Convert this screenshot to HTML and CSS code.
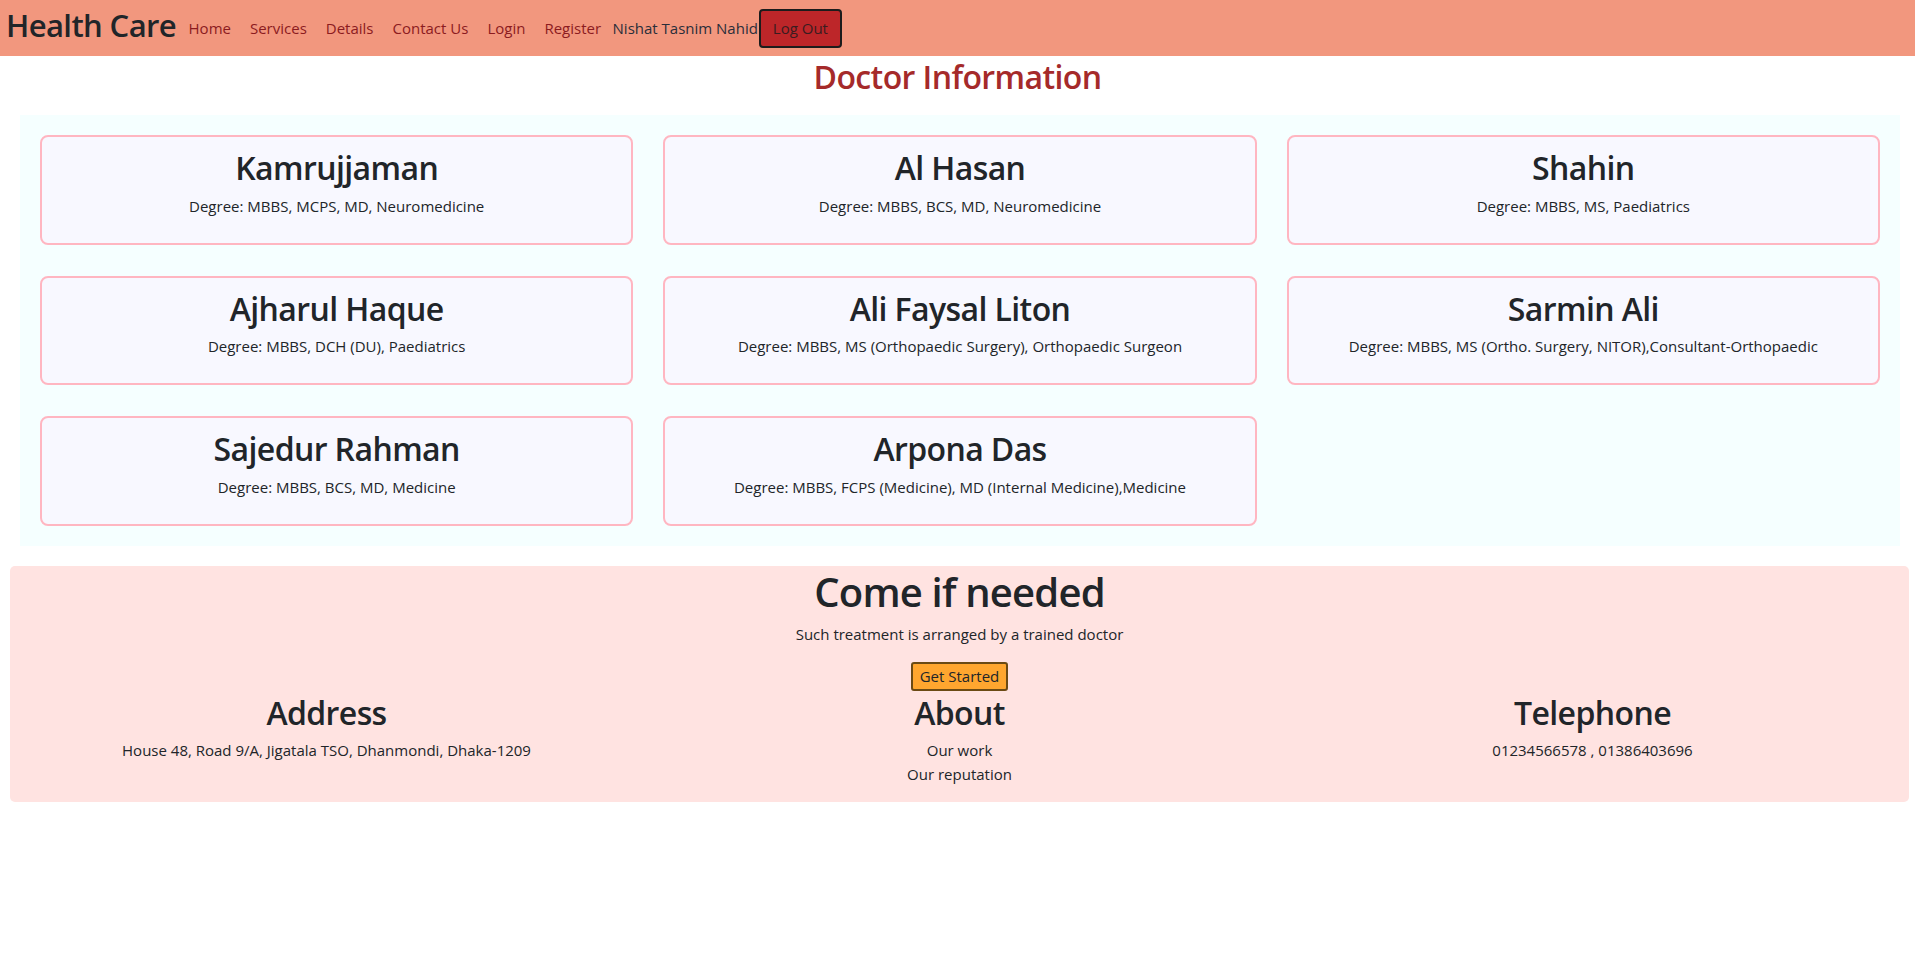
FILE: index.html
```html
<!DOCTYPE html>
<html lang="en">
<head>
<meta charset="utf-8">
<title>Health Care</title>
<link rel="stylesheet" href="styles.css">
</head>
<body>
<nav class="navbar">
  <a class="brand" href="#">Health Care</a>
  <div class="nav-links">
    <a class="nav-link" href="#">Home</a>
    <a class="nav-link" href="#">Services</a>
    <a class="nav-link" href="#">Details</a>
    <a class="nav-link" href="#">Contact Us</a>
    <a class="nav-link" href="#">Login</a>
    <a class="nav-link" href="#">Register</a>
  </div>
  <span class="user-name">Nishat Tasnim Nahid</span>
  <button class="logout-btn">Log Out</button>
</nav>

<h2 class="page-title">Doctor Information</h2>

<section class="doctor-grid">
  <div class="doctor-card">
    <h2 class="doctor-name">Kamrujjaman</h2>
    <p class="doctor-degree">Degree: MBBS, MCPS, MD, Neuromedicine</p>
  </div>
  <div class="doctor-card">
    <h2 class="doctor-name">Al Hasan</h2>
    <p class="doctor-degree">Degree: MBBS, BCS, MD, Neuromedicine</p>
  </div>
  <div class="doctor-card">
    <h2 class="doctor-name">Shahin</h2>
    <p class="doctor-degree">Degree: MBBS, MS, Paediatrics</p>
  </div>
  <div class="doctor-card">
    <h2 class="doctor-name">Ajharul Haque</h2>
    <p class="doctor-degree">Degree: MBBS, DCH (DU), Paediatrics</p>
  </div>
  <div class="doctor-card">
    <h2 class="doctor-name">Ali Faysal Liton</h2>
    <p class="doctor-degree">Degree: MBBS, MS (Orthopaedic Surgery), Orthopaedic Surgeon</p>
  </div>
  <div class="doctor-card">
    <h2 class="doctor-name">Sarmin Ali</h2>
    <p class="doctor-degree">Degree: MBBS, MS (Ortho. Surgery, NITOR),Consultant-Orthopaedic</p>
  </div>
  <div class="doctor-card">
    <h2 class="doctor-name">Sajedur Rahman</h2>
    <p class="doctor-degree">Degree: MBBS, BCS, MD, Medicine</p>
  </div>
  <div class="doctor-card">
    <h2 class="doctor-name">Arpona Das</h2>
    <p class="doctor-degree">Degree: MBBS, FCPS (Medicine), MD (Internal Medicine),Medicine</p>
  </div>
</section>

<footer class="footer">
  <h1 class="footer-title">Come if needed</h1>
  <p class="footer-lead">Such treatment is arranged by a trained doctor</p>
  <button class="start-btn">Get Started</button>
  <div class="footer-cols">
    <div class="footer-col">
      <h2 class="footer-heading">Address</h2>
      <p class="footer-text">House 48, Road 9/A, Jigatala TSO, Dhanmondi, Dhaka-1209</p>
    </div>
    <div class="footer-col">
      <h2 class="footer-heading">About</h2>
      <p class="footer-text">Our work<br>Our reputation</p>
    </div>
    <div class="footer-col">
      <h2 class="footer-heading">Telephone</h2>
      <p class="footer-text">01234566578 , 01386403696</p>
    </div>
  </div>
</footer>
</body>
</html>
```
FILE: styles.css
```css
* {
  box-sizing: border-box;
}

body {
  margin: 0;
  font-family: "Open Sans", "Noto Sans", sans-serif;
  font-size: 16px;
  line-height: 1.5;
  color: #212529;
  background: #ffffff;
}

h1, h2, p {
  margin: 0;
}

/* ---------- navbar ---------- */
.navbar {
  height: 56px;
  background: #f2977e;
  display: flex;
  align-items: center;
  padding: 0 6px;
}

.brand {
  font-size: 31px;
  font-weight: 600;
  letter-spacing: -0.6px;
  line-height: 1.2;
  color: #212529;
  text-decoration: none;
  margin-right: 3px;
  margin-top: -4px;
}

.nav-links {
  display: flex;
  align-items: center;
}

.nav-link {
  color: #8c1b1f;
  text-decoration: none;
  padding: 0 9.5px;
  font-size: 15px;
}

.user-name {
  margin-left: 2px;
  font-size: 15px;
  color: #2a2e3a;
}

.logout-btn {
  margin-left: 1px;
  font-family: inherit;
  font-size: 15px;
  line-height: 24px;
  padding: 5.5px 12px;
  background: #bd2629;
  color: #3a1c20;
  border: 2px solid #1c1c1c;
  border-radius: 4px;
}

/* ---------- doctor list ---------- */
.page-title {
  text-align: center;
  font-size: 32px;
  font-weight: 600;
  letter-spacing: -0.6px;
  line-height: 1.2;
  color: #a52a2a;
  margin: 2px 0 19px;
}

.doctor-grid {
  margin: 0 15px 0 20px;
  padding: 20px 20px 20px;
  background: #f5ffff;
  display: grid;
  grid-template-columns: repeat(3, 1fr);
  column-gap: 30px;
  row-gap: 31px;
}

.doctor-card {
  background: #f8f8ff;
  border: 2px solid #ffb6c1;
  border-radius: 8px;
  padding: 12px 10px 9px;
  text-align: center;
}

.doctor-name {
  font-size: 32px;
  font-weight: 600;
  letter-spacing: -0.6px;
  line-height: 1.2;
  margin-bottom: 6px;
}

.doctor-degree {
  font-size: 15px;
  line-height: 24px;
  margin-bottom: 16px;
}

/* ---------- footer ---------- */
.footer {
  margin: 20px 6px 0 10px;
  padding-top: 2px;
  background: #ffe3e1;
  border-radius: 5px;
  text-align: center;
}

.footer-title {
  font-size: 40px;
  font-weight: 600;
  letter-spacing: -0.8px;
  line-height: 1.2;
  margin-bottom: 6px;
}

.footer-lead {
  font-size: 15px;
  line-height: 24px;
  margin-bottom: 16px;
}

.start-btn {
  font-family: inherit;
  font-size: 15px;
  line-height: 23px;
  padding: 1px 7px;
  background: #ffa62f;
  color: #212529;
  border: 2px solid #6b4a14;
  border-radius: 3px;
  vertical-align: top;
}

.footer-cols {
  margin-top: 3px;
  display: grid;
  grid-template-columns: repeat(3, 1fr);
}

.footer-heading {
  font-size: 32px;
  font-weight: 600;
  letter-spacing: -0.6px;
  line-height: 1.2;
  margin-bottom: 6px;
}

.footer-text {
  font-size: 15px;
  line-height: 24px;
  margin-bottom: 16px;
}
```
